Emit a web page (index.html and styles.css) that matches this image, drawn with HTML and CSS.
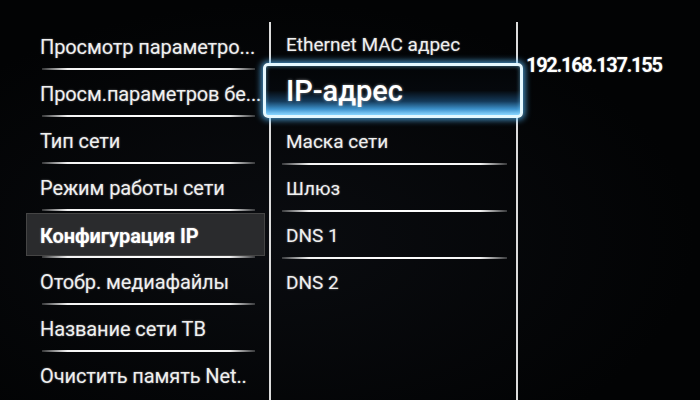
FILE: index.html
```html
<!DOCTYPE html>
<html lang="ru">
<head>
<meta charset="utf-8">
<title>Настройки сети</title>
<link rel="stylesheet" href="styles.css">
</head>
<body>
<div class="screen">
  <div class="col col-left">
    <div class="row"><div class="label">Просмотр параметро...</div><div class="sep"></div></div>
    <div class="row"><div class="label">Просм.параметров бе...</div><div class="sep"></div></div>
    <div class="row"><div class="label">Тип сети</div><div class="sep"></div></div>
    <div class="row"><div class="label">Режим работы сети</div><div class="sep"></div></div>
    <div class="row row-active"><div class="label">Конфигурация IP</div><div class="sep"></div></div>
    <div class="row"><div class="label">Отобр. медиафайлы</div><div class="sep"></div></div>
    <div class="row"><div class="label">Название сети ТВ</div><div class="sep"></div></div>
    <div class="row"><div class="label">Очистить память Net..</div></div>
  </div>
  <div class="col col-mid">
    <div class="mrow mrow-first"><div class="label">Ethernet MAC адрес</div></div>
    <div class="focus"><div class="label">IP-адрес</div></div>
    <div class="mrow"><div class="label">Маска сети</div><div class="sep"></div></div>
    <div class="mrow"><div class="label">Шлюз</div><div class="sep"></div></div>
    <div class="mrow"><div class="label">DNS 1</div><div class="sep"></div></div>
    <div class="mrow"><div class="label">DNS 2</div></div>
  </div>
  <div class="col col-right">
    <div class="value">192.168.137.155</div>
  </div>
</div>
</body>
</html>
```
FILE: styles.css
```css
html, body {
  margin: 0;
  padding: 0;
  background: #000;
}
body {
  width: 700px;
  height: 400px;
  overflow: hidden;
  font-family: Roboto, "Noto Sans", sans-serif;
  color: #f0f0f0;
}
.screen {
  display: grid;
  grid-template-columns: 271px 247px 1fr;
  height: 400px;
  background: radial-gradient(ellipse at 40% 60%, #0a0c10 0%, #020304 70%);
}
.col {
  margin-top: 22px;
  display: flex;
  flex-direction: column;
}
.col-left {
  border-right: 2px solid #dcdcdc;
  padding: 1px 4px 0 26px;
}
.col-mid {
  border-right: 2px solid #dcdcdc;
  padding-top: 1px;
}
.row {
  display: flex;
  flex-direction: column;
}
.row .label {
  height: 45px;
  display: flex;
  align-items: center;
  padding-left: 14px;
  padding-top: 2px;
  box-sizing: border-box;
  font-size: 20px;
  letter-spacing: -0.1px;
  white-space: nowrap;
  text-shadow: 0 0 2px rgba(255,255,255,0.45);
}
.sep {
  height: 2px;
  background: linear-gradient(to right, rgba(200,200,200,0.25), #f4f4f4 12%, #ffffff 50%, #f4f4f4 88%, rgba(200,200,200,0.25));
}
.row .sep {
  margin: 0 10px 0 16px;
}
.row-active .label {
  background: #2a2b2d;
  border: 1px solid #454545;
  font-weight: 700;
  color: #fff;
  margin-top: 2px;
  height: 43px;
  padding-left: 13px;
}
.mrow {
  display: flex;
  flex-direction: column;
}
.mrow .label {
  height: 45px;
  display: flex;
  align-items: center;
  padding-left: 15px;
  padding-top: 2px;
  box-sizing: border-box;
  font-size: 19px;
  white-space: nowrap;
  text-shadow: 0 0 2px rgba(255,255,255,0.45);
}
.mrow-first .label {
  height: 40px;
}
.mrow .sep {
  margin: 0 9px 0 11px;
}
.focus {
  position: relative;
  z-index: 2;
  margin: 0 -7px 0 -8px;
  height: 55px;
  box-sizing: border-box;
  border: 3px solid #e4f8ff;
  border-radius: 5px;
  box-shadow: 0 0 6px 2px rgba(90,190,255,0.75), inset 0 0 4px rgba(120,210,255,0.6);
  background: linear-gradient(to bottom, #030507 0%, #05080c 50%, #143a5a 72%, #3d92cc 88%, #8fd6ff 100%);
}
.focus .label {
  height: 49px;
  display: flex;
  align-items: center;
  padding-left: 20px;
  font-size: 29px;
  font-weight: 500;
  color: #fff;
  text-shadow: 0 0 3px rgba(255,255,255,0.5);
}
.col-right {
  padding: 33px 0 0 8px;
}
.value {
  font-size: 20px;
  font-weight: 700;
  letter-spacing: -1.3px;
  line-height: 20px;
  color: #fff;
  white-space: nowrap;
  text-shadow: 0 0 2px rgba(255,255,255,0.4);
}
```
